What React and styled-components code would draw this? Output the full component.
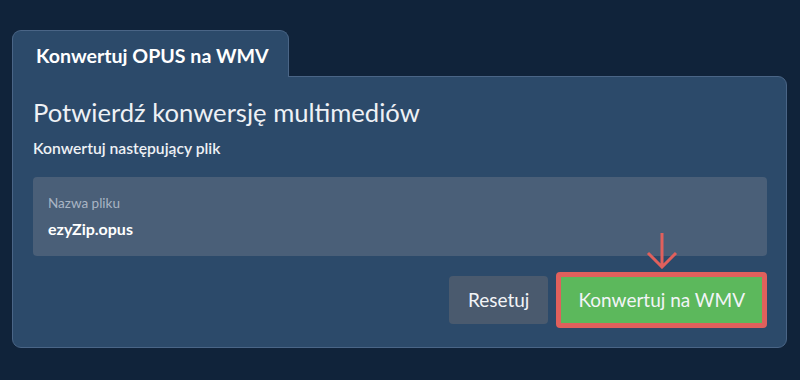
import React from "react";
import styled, { createGlobalStyle } from "styled-components";

const Global = createGlobalStyle`
  html, body { margin: 0; padding: 0; background: #10233a; }
  body { font-family: Lato, "Noto Sans", sans-serif; color: #f2f4f7; }
  * { box-sizing: border-box; }
`;

const Page = styled.div`
  width: 800px;
  height: 380px;
  padding: 30px 13px 0 12px;
  background: #10233a;
`;

const Card = styled.div`
  display: flex;
  flex-direction: column;
  align-items: flex-start;
`;

const Tab = styled.div`
  position: relative;
  z-index: 1;
  margin-bottom: -1px;
  width: 277px;
  height: 47px;
  padding: 13px 0 0 23px;
  background: #2c4a6a;
  border: 1px solid #4a6586;
  border-bottom: none;
  border-radius: 9px 9px 0 0;
  font-weight: 700;
  font-size: 19.6px;
  line-height: 1.2;
  color: #ffffff;
  white-space: nowrap;
`;

const Panel = styled.div`
  align-self: stretch;
  background: #2c4a6a;
  border: 1px solid #4a6586;
  border-radius: 0 9px 9px 9px;
  padding: 20px 19px 19px 20px;
  display: flex;
  flex-direction: column;
`;

const Heading = styled.h1`
  margin: 0;
  font-size: 25.6px;
  font-weight: 400;
  line-height: 1.2;
  color: #eef1f5;
`;

const Sub = styled.p`
  margin: 11px 0 0;
  font-size: 15.7px;
  font-weight: 600;
  line-height: 1.2;
  color: #eef1f5;
`;

const Field = styled.div`
  margin-top: 19px;
  height: 79px;
  background: #4a5f78;
  border-radius: 4px;
  padding: 18px 15px 0;
  display: flex;
  flex-direction: column;
  gap: 8px;
`;

const Label = styled.div`
  font-size: 13.5px;
  line-height: 1.2;
  color: #a9b5c4;
`;

const Value = styled.div`
  font-size: 16px;
  font-weight: 700;
  line-height: 1.2;
  color: #ffffff;
`;

const Actions = styled.div`
  margin-top: 16px;
  display: flex;
  justify-content: flex-end;
  align-items: center;
  gap: 8px;
`;

const Button = styled.button`
  font-family: Lato, "Noto Sans", sans-serif;
  font-size: 19px;
  line-height: 1;
  color: #f2f4f7;
  border-radius: 4px;
  cursor: pointer;
  height: ${(p) => (p.$primary ? "56px" : "48px")};
  padding: ${(p) => (p.$primary ? "0 17px" : "0 19px")};
  background: ${(p) => (p.$primary ? "#5cb85c" : "#4a5a6e")};
  border: ${(p) => (p.$primary ? "5px solid #e0605c" : "none")};
`;

const Highlight = styled.div`
  position: relative;
  display: flex;
`;

const Arrow = styled.svg`
  position: absolute;
  left: 50%;
  bottom: 100%;
  margin-bottom: 3px;
  transform: translateX(-50%);
`;

export default function App() {
  return (
    <>
      <Global />
      <Page>
        <Card>
          <Tab>Konwertuj OPUS na WMV</Tab>
          <Panel>
            <Heading>Potwierdź konwersję multimediów</Heading>
            <Sub>Konwertuj następujący plik</Sub>
            <Field>
              <Label>Nazwa pliku</Label>
              <Value>ezyZip.opus</Value>
            </Field>
            <Actions>
              <Button>Resetuj</Button>
              <Highlight>
                <Arrow width="32" height="37" viewBox="0 0 32 37">
                  <path
                    d="M16 1 V35 M2 21 L16 35 L30 21"
                    fill="none"
                    stroke="#e0605c"
                    strokeWidth="3"
                  />
                </Arrow>
                <Button $primary>Konwertuj na WMV</Button>
              </Highlight>
            </Actions>
          </Panel>
        </Card>
      </Page>
    </>
  );
}
